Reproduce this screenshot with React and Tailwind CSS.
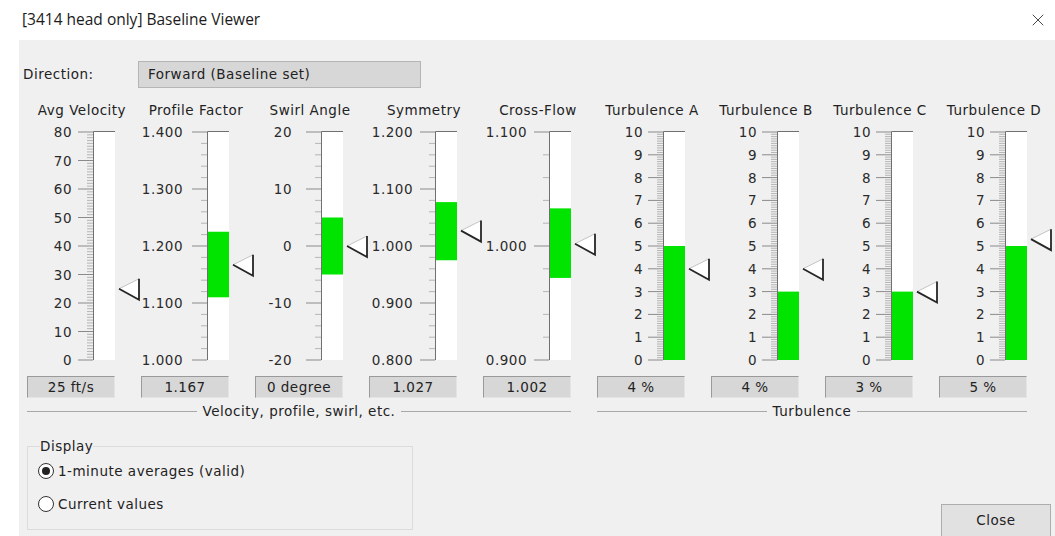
import React from 'react';
import { X } from 'lucide-react';

// scale geometry inside each gauge svg
const TOP = 12;
const BOT = 240;

const int = (v) => String(Math.round(v));
const dec = (v) => v.toFixed(3);

const GAUGES = [
  { title: 'Avg Velocity', min: 0, max: 80, major: 10, minor: 1, fmt: int, labelRight: 45, value: 25, readout: '25 ft/s' },
  { title: 'Profile Factor', min: 1.0, max: 1.4, major: 0.1, minor: 0.02, fmt: dec, labelRight: 42, fill: [1.11, 1.225], value: 1.167, readout: '1.167' },
  { title: 'Swirl Angle', min: -20, max: 20, major: 10, minor: 2, fmt: int, labelRight: 37, fill: [-5, 5], value: 0, readout: '0 degree' },
  { title: 'Symmetry', min: 0.8, max: 1.2, major: 0.1, minor: 0.02, fmt: dec, labelRight: 44, fill: [0.975, 1.077], value: 1.027, readout: '1.027' },
  { title: 'Cross-Flow', min: 0.9, max: 1.1, major: 0.1, minor: 0.02, fmt: dec, labelRight: 44, fill: [0.972, 1.033], value: 1.002, readout: '1.002' },
  { title: 'Turbulence A', min: 0, max: 10, major: 1, minor: 0.1, fmt: int, labelRight: 46, fill: [0, 5], value: 4, readout: '4 %' },
  { title: 'Turbulence B', min: 0, max: 10, major: 1, minor: 0.1, fmt: int, labelRight: 46, fill: [0, 3], value: 4, readout: '4 %' },
  { title: 'Turbulence C', min: 0, max: 10, major: 1, minor: 0.1, fmt: int, labelRight: 46, fill: [0, 3], value: 3, readout: '3 %' },
  { title: 'Turbulence D', min: 0, max: 10, major: 1, minor: 0.1, fmt: int, labelRight: 46, fill: [0, 5], value: 5.3, readout: '5 %' },
];

// pointer next to the bar: white wedge, dark lower edge and back
const Marker = ({ x, y }) => (
  <g>
    <polygon points={`${x},${y} ${x + 20},${y - 10} ${x + 20},${y + 11}`} fill="#fff" />
    <line x1={x} y1={y} x2={x + 20} y2={y - 10} stroke="#c4c4c4" />
    <path d={`M${x} ${y} L${x + 20} ${y + 11} V${y - 10}`} stroke="#262626" strokeWidth="1.8" fill="none" />
  </g>
);

const Gauge = ({ g }) => {
  const span = g.max - g.min;
  const y = (v) => TOP + ((g.max - v) / span) * (BOT - TOP);

  const ticks = [];
  const n = Math.round(span / g.minor);
  for (let i = 0; i <= n; i++) {
    const v = g.min + i * g.minor;
    const k = (v - g.min) / g.major;
    ticks.push({ v, major: Math.abs(k - Math.round(k)) < 1e-6 });
  }

  return (
    <div className="w-[114px] flex flex-col">
      <div className="w-[110px] h-[20px] leading-[20px] text-center whitespace-nowrap">{g.title}</div>
      <svg width="114" height="248" className="block">
        <rect x="67" y={TOP} width="21" height={BOT - TOP} fill="#fff" />
        {g.fill && (
          <rect x="67" y={y(g.fill[1])} width="21" height={y(g.fill[0]) - y(g.fill[1])} fill="#00e400" />
        )}
        <path d={`M66.5 ${BOT} V${TOP - 0.5} H88`} stroke="#707070" fill="none" />
        {ticks.map((t, i) => (
          <line
            key={i}
            x1={t.major ? 51 : 60}
            x2="66"
            y1={y(t.v)}
            y2={y(t.v)}
            stroke={t.major ? '#8a8a8a' : '#a6a6a6'}
            strokeWidth={t.major ? 1 : 0.8}
          />
        ))}
        {ticks.filter((t) => t.major).map((t, i) => (
          <text
            key={i}
            x={g.labelRight}
            y={y(t.v)}
            textAnchor="end"
            dominantBaseline="central"
            fontFamily="DejaVu Sans"
            fontSize="13.5"
            letterSpacing="0.5"
            fill="#2a2a2a"
          >
            {g.fmt(t.v)}
          </text>
        ))}
        <Marker x={92} y={y(g.value)} />
      </svg>
      <div className="mt-[8px] w-[88px] h-[22px] leading-[20px] text-center bg-[#d7d7d7] border border-t-[#9a9a9a] border-l-[#9a9a9a] border-b-[#e4e4e4] border-r-[#e4e4e4]">
        {g.readout}
      </div>
    </div>
  );
};

const GroupLabel = ({ label, width }) => (
  <div className="flex items-center" style={{ width }}>
    <div className="flex-1 h-px bg-[#a8a8a8]" />
    <span className="px-[6px] whitespace-nowrap">{label}</span>
    <div className="flex-1 h-px bg-[#a8a8a8]" />
  </div>
);

const Radio = ({ checked, label }) => (
  <div className="flex items-center h-[22px] gap-[4px]">
    <span className="w-[16px] h-[16px] rounded-full border border-[#333] bg-white flex items-center justify-center">
      {checked && <span className="w-[8px] h-[8px] rounded-full bg-[#222]" />}
    </span>
    <span>{label}</span>
  </div>
);

export default function App() {
  return (
    <div className="w-[1055px] h-[536px] overflow-hidden bg-white text-[#222] font-['DejaVu_Sans',sans-serif] text-[13.5px] tracking-[0.5px]">
      <div className="h-[40px] flex items-center justify-between pl-[22px] pr-[7px]">
        <span className="font-['Open_Sans',sans-serif] text-[15.5px] tracking-normal text-[#1b1b1b]">
          [3414 head only] Baseline Viewer
        </span>
        <X size={20} strokeWidth={1} className="text-[#222]" />
      </div>

      <div className="ml-[19px] h-[496px] bg-[#f0f0f0] pl-[4px] pt-[21px]">
        <div className="flex items-center h-[27px]">
          <span className="w-[115px]">Direction:</span>
          <div className="w-[283px] h-[27px] bg-[#d7d7d7] border border-[#b5b5b5] flex items-center pl-[9px]">
            Forward (Baseline set)
          </div>
        </div>

        <div className="flex pl-[4px] mt-[12px]">
          {GAUGES.map((g) => (
            <Gauge key={g.title} g={g} />
          ))}
        </div>

        <div className="flex pl-[4px] mt-[4px] h-[18px] gap-[26px]">
          <GroupLabel label="Velocity, profile, swirl, etc." width={544} />
          <GroupLabel label="Turbulence" width={430} />
        </div>

        <div className="flex items-start pl-[4px] mt-[18px]">
          <fieldset className="w-[386px] h-[92px] border border-[#dcdcdc] pl-[10px]">
            <legend className="ml-[2px] leading-[16px]">Display</legend>
            <div className="mt-[6px] flex flex-col gap-[11px]">
              <Radio checked label="1-minute averages (valid)" />
              <Radio label="Current values" />
            </div>
          </fieldset>
          <button className="ml-auto mr-[4px] mt-[66px] w-[110px] h-[34px] pb-[2px] bg-[#e1e1e1] border border-[#adadad] text-[#222]">
            Close
          </button>
        </div>
      </div>
    </div>
  );
}
